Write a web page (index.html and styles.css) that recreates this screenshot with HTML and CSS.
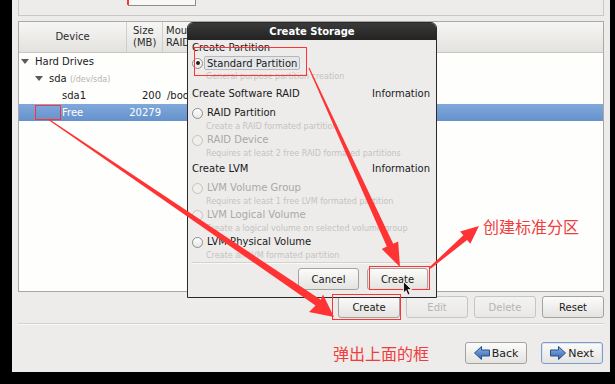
FILE: index.html
```html
<!DOCTYPE html>
<html lang="en">
<head>
  <meta charset="UTF-8" />
  <title>Create Storage</title>
  <link rel="stylesheet" href="styles.css">
</head>
<body>

  <div class="screen">
    <div class="top-panel"><div class="top-field"></div></div>

    <div class="tree">
      <div class="tree-head">
        <div class="th th-device">Device</div>
        <div class="th">Size<br>(MB)</div>
        <div class="th">Mou<br>RAID</div>
      </div>
      <div class="row">
        <div class="cell lvl0"><span class="exp"></span>Hard Drives</div>
        <div class="cell num"></div>
        <div class="cell"></div>
      </div>
      <div class="row">
        <div class="cell lvl1"><span class="exp"></span>sda <small>(/dev/sda)</small></div>
        <div class="cell num"></div>
        <div class="cell"></div>
      </div>
      <div class="row">
        <div class="cell lvl2">sda1</div>
        <div class="cell num">200</div>
        <div class="cell mount">/boo</div>
      </div>
      <div class="row selected">
        <div class="cell lvl2">Free</div>
        <div class="cell num">20279</div>
        <div class="cell"></div>
      </div>
    </div>

    <div class="actions">
      <button class="btn">Create</button>
      <button class="btn" disabled>Edit</button>
      <button class="btn" disabled>Delete</button>
      <button class="btn">Reset</button>
    </div>

    <div class="sep"></div>

    <div class="nav">
      <span class="note">弹出上面的框</span>
      <button class="btn nav-btn">
        <svg width="16" height="14" viewBox="0 0 16 14"><defs><linearGradient id="ab" x1="0" y1="0" x2="0" y2="1"><stop offset="0" stop-color="#8fb5e6"/><stop offset="1" stop-color="#2f62ad"/></linearGradient></defs><polygon points="0.5,7 7.5,0.5 7.5,4 15.5,4 15.5,10 7.5,10 7.5,13.5" fill="url(#ab)" stroke="#24508f"/></svg>
        Back
      </button>
      <button class="btn nav-btn default">
        <svg width="16" height="14" viewBox="0 0 16 14"><polygon points="15.5,7 8.5,0.5 8.5,4 0.5,4 0.5,10 8.5,10 8.5,13.5" fill="url(#ab)" stroke="#24508f"/></svg>
        Next
      </button>
    </div>
  </div>

  <div class="dialog">
    <div class="dialog-title">Create Storage</div>
    <div class="dialog-body">
      <div class="heading first">Create Partition</div>
      <div class="opt"><span class="radio on"></span><span class="focus">Standard Partition</span></div>
      <div class="desc tall">General purpose partition creation</div>

      <div class="heading"><span>Create Software RAID</span><span>Information</span></div>
      <div class="opt"><span class="radio"></span>RAID Partition</div>
      <div class="desc">Create a RAID formated partition</div>
      <div class="opt off"><span class="radio"></span>RAID Device</div>
      <div class="desc">Requires at least 2 free RAID formated partitions</div>

      <div class="heading"><span>Create LVM</span><span>Information</span></div>
      <div class="opt off"><span class="radio"></span>LVM Volume Group</div>
      <div class="desc">Requires at least 1 free LVM formated partition</div>
      <div class="opt off"><span class="radio"></span>LVM Logical Volume</div>
      <div class="desc">Create a logical volume on selected volume group</div>
      <div class="opt"><span class="radio"></span>LVM Physical Volume</div>
      <div class="desc">Create an LVM formated partition</div>

      <div class="dialog-sep"></div>
      <div class="dialog-actions">
        <button class="btn">Cancel</button>
        <button class="btn">Create</button>
      </div>
    </div>
  </div>

  <span class="note note-raid">创建标准分区</span>

  <svg class="marks" width="615" height="384" viewBox="0 0 615 384">
    <g fill="none" stroke="#ff3333" stroke-width="1">
      <rect x="194.5" y="47.5" width="112" height="28"/>
      <rect x="35.5" y="105.5" width="25" height="14"/>
      <rect x="369.5" y="266.5" width="60" height="23"/>
      <rect x="332.5" y="294.5" width="68" height="25"/>
      <line x1="128" y1="0" x2="128" y2="5" stroke-width="2"/>
    </g>
    <g fill="#ff3333">
      <polygon points="47.7,119.4 315.5,305.6 309,312 334,317 323,294.4 320.8,299.8 48.3,118.6"/>
      <polygon points="308.5,68.2 386.8,246.6 381.8,249 400,267 398.2,241.5 393.2,243.7 309.5,67.8"/>
      <polygon points="430.6,268.8 467.1,239.9 470.3,243.7 479,226 460.1,231.5 463.3,235.3 429.4,267.2"/>
    </g>
    <polygon points="403.5,281.5 403.5,293 406,290.5 408,295 410,294 408,289.5 411.5,289.5" fill="#111" stroke="#fff" stroke-width="0.8"/>
  </svg>

</body>
</html>
```

FILE: styles.css
```css
body {
  margin: 0;
  width: 615px;
  height: 384px;
  position: relative;
  overflow: hidden;
  background: #000;
  font-family: "DejaVu Sans", sans-serif;
  font-size: 10px;
  color: #1a1a1a;
}
.screen {
  margin-left: 12px;
  width: 598px;
  height: 372px;
  padding: 0 6px;
  box-sizing: border-box;
  background: #edeceb;
  display: flex;
  flex-direction: column;
}
.top-panel {
  height: 16px;
  border: 1px solid #c9c8c5;
  border-top: none;
  box-sizing: border-box;
}
.top-field {
  margin-left: 109px;
  width: 66px;
  height: 5px;
  border: 1px solid #8d8c8a;
  border-top: none;
  background: #f7f7f6;
}
.tree {
  margin-top: 5px;
  height: 271px;
  border: 1px solid #a9a8a5;
  background: #fefefd;
  box-sizing: border-box;
}
.tree-head {
  height: 31px;
  display: grid;
  grid-template-columns: 108px 36px 1fr;
  background: linear-gradient(#f6f6f4, #e3e2df);
  border-bottom: 1px solid #c6c5c2;
  box-sizing: border-box;
}
.th {
  border-right: 1px solid #cfcecb;
  padding: 3px 0 0 6px;
  line-height: 12px;
  color: #2a2a2a;
}
.th-device {
  padding: 0;
  display: flex;
  align-items: center;
  justify-content: center;
}
.th:last-child {
  border-right: none;
  padding-left: 3px;
}
.row {
  height: 17px;
  line-height: 17px;
  display: grid;
  grid-template-columns: 108px 36px 1fr;
  white-space: nowrap;
}
.row.selected {
  background: linear-gradient(#80a8da, #6592cc);
  color: #fff;
}
.cell {
  overflow: hidden;
}
.cell small {
  font-size: 8px;
  color: #b4b3b0;
}
.lvl0 { padding-left: 2px; }
.lvl1 { padding-left: 16px; }
.lvl2 { padding-left: 43px; }
.num {
  text-align: right;
  padding-right: 2px;
}
.mount { padding-left: 4px; }
.exp {
  display: inline-block;
  width: 14px;
  height: 17px;
  vertical-align: top;
  position: relative;
}
.exp::before {
  content: "";
  position: absolute;
  left: 0;
  top: 6px;
  border-left: 4px solid transparent;
  border-right: 4px solid transparent;
  border-top: 5px solid #5a5a5a;
}
.btn {
  width: 62px;
  height: 22px;
  padding: 0;
  font-family: "DejaVu Sans", sans-serif;
  font-size: 10px;
  color: #1a1a1a;
  background: linear-gradient(#fbfbfa, #e4e3e0);
  border: 1px solid #a3a29f;
  border-radius: 3px;
}
.btn:disabled {
  color: #b6b5b2;
  border-color: #c7c6c3;
  background: linear-gradient(#f2f2f0, #e9e8e6);
}
.actions {
  margin-top: 4px;
  display: flex;
  justify-content: flex-end;
  gap: 6px;
}
.sep {
  margin-top: 5px;
  height: 1px;
  background: #d3d2cf;
  border-bottom: 1px solid #f8f8f7;
}
.nav {
  margin-top: 16px;
  display: flex;
  justify-content: flex-end;
  align-items: center;
  gap: 14px;
  padding-right: 1px;
}
.nav-btn {
  display: flex;
  align-items: center;
  justify-content: center;
  gap: 2px;
  font-size: 11px;
}
.nav-btn.default {
  border-color: #7f9bc2;
  box-shadow: inset 0 0 0 1px #dbe5f2;
}
.note {
  font-family: "Noto Sans CJK SC", sans-serif;
  font-size: 16px;
  color: #f03c3c;
  margin-right: 22px;
}
.note-raid {
  position: absolute;
  left: 483px;
  top: 214px;
  margin: 0;
}
.dialog {
  position: absolute;
  left: 187px;
  top: 22px;
  width: 250px;
  height: 276px;
  border: 1px solid #2a2a2a;
  border-radius: 6px 6px 0 0;
  box-sizing: border-box;
  background: #edeceb;
  display: flex;
  flex-direction: column;
}
.dialog-title {
  height: 17px;
  line-height: 17px;
  text-align: center;
  font-weight: bold;
  font-size: 10px;
  color: #fff;
  background: linear-gradient(#3a3a3a, #232323);
  border-radius: 5px 5px 0 0;
}
.dialog-body {
  flex: 1;
  padding: 0 6px 0 4px;
  background: #edeceb;
}
.heading {
  height: 14px;
  line-height: 14px;
  margin-top: 2px;
  display: flex;
  justify-content: space-between;
}
.heading.first { margin-top: 1px; }
.opt {
  height: 14px;
  line-height: 14px;
  margin-top: 5px;
  display: flex;
  align-items: center;
  white-space: nowrap;
}
.heading.first + .opt { margin-top: 1px; }
.desc + .opt { margin-top: 0; }
.opt.off { color: #a9a8a5; }
.radio {
  width: 11px;
  height: 11px;
  margin-right: 4px;
  border: 1px solid #8e8d8a;
  border-radius: 50%;
  box-sizing: border-box;
  background: linear-gradient(#ffffff, #e8e7e5);
  position: relative;
}
.opt.off .radio {
  border-color: #c4c3c0;
  background: #efeeec;
}
.radio.on::after {
  content: "";
  position: absolute;
  left: 2.5px;
  top: 2.5px;
  width: 4px;
  height: 4px;
  border-radius: 50%;
  background: #222;
}
.focus {
  margin-left: -3px;
  padding: 0 2px;
  height: 14px;
  line-height: 13px;
  border: 1px solid #b3b8c0;
  border-radius: 2px;
  box-sizing: border-box;
  background: #e6e7e9;
}
.desc {
  height: 13px;
  line-height: 13px;
  padding-left: 14px;
  font-size: 8px;
  color: #c4c3c0;
  white-space: nowrap;
}
.desc.tall { height: 15px; }
.dialog-sep {
  height: 1px;
  background: #d3d2cf;
  border-bottom: 1px solid #f8f8f7;
}
.dialog-actions {
  margin-top: 4px;
  display: flex;
  justify-content: flex-end;
  gap: 8px;
  padding-right: 2px;
}
.dialog-actions .btn {
  width: 61px;
}
.marks {
  position: absolute;
  left: 0;
  top: 0;
}
```
